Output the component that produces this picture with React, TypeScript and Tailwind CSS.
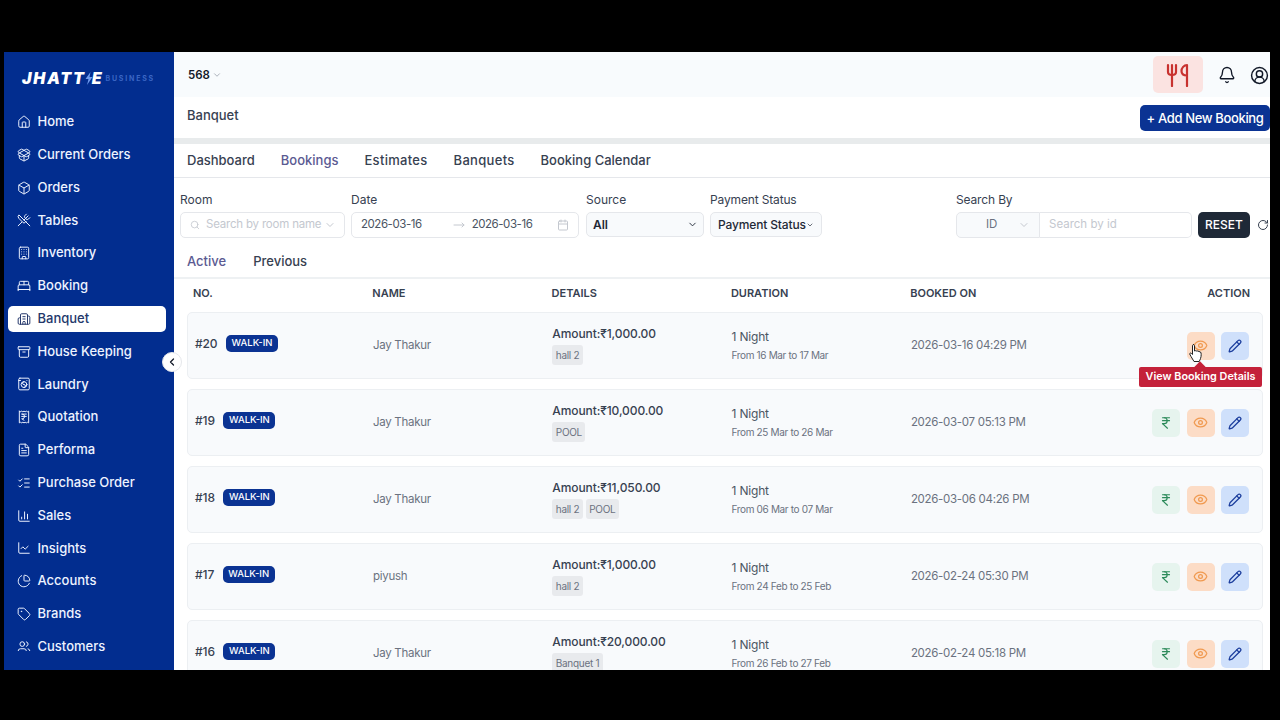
import React from "react";
import {
  Home, PackageOpen, Box, UtensilsCrossed, Building, BedDouble, Building2, Archive, WashingMachine, ReceiptIndianRupee, FileText, ListChecks, ChartColumn, ChartLine, ChartPie, Tag, Users, ChevronLeft, ChevronDown, Bell, CircleUserRound, Search, Calendar, RotateCw, IndianRupee, Eye, Pencil, MoveRight,
} from "lucide-react";

const nav: [string, any][] = [
  ["Home", Home], ["Current Orders", PackageOpen], ["Orders", Box], ["Tables", UtensilsCrossed], ["Inventory", Building], ["Booking", BedDouble], ["Banquet", Building2], ["House Keeping", Archive], ["Laundry", WashingMachine], ["Quotation", ReceiptIndianRupee], ["Performa", FileText], ["Purchase Order", ListChecks], ["Sales", ChartColumn], ["Insights", ChartLine], ["Accounts", ChartPie], ["Brands", Tag], ["Customers", Users],
];

const rows = [
  { id: "#20", name: "Jay Thakur", amt: "₹1,000.00", tags: ["hall 2"], from: "From 16 Mar to 17 Mar", on: "2026-03-16 04:29 PM", pay: false },
  { id: "#19", name: "Jay Thakur", amt: "₹10,000.00", tags: ["POOL"], from: "From 25 Mar to 26 Mar", on: "2026-03-07 05:13 PM", pay: true },
  { id: "#18", name: "Jay Thakur", amt: "₹11,050.00", tags: ["hall 2", "POOL"], from: "From 06 Mar to 07 Mar", on: "2026-03-06 04:26 PM", pay: true },
  { id: "#17", name: "piyush", amt: "₹1,000.00", tags: ["hall 2"], from: "From 24 Feb to 25 Feb", on: "2026-02-24 05:30 PM", pay: true },
  { id: "#16", name: "Jay Thakur", amt: "₹20,000.00", tags: ["Banquet 1"], from: "From 26 Feb to 27 Feb", on: "2026-02-24 05:18 PM", pay: true },
];

export default function App() {
  return (
    <div className="w-[1280px] h-[720px] bg-black pt-[52px] pl-[4px] pr-[10px] pb-[50px] overflow-hidden font-['Inter',sans-serif] text-[#1f2937]">
      <div className="flex h-[618px] w-[1266px] bg-white overflow-hidden">
        <aside className="w-[170px] shrink-0 bg-[#022d8f] relative overflow-hidden">
          <div className="h-[52px] flex items-center pl-[18px]">
            <span className="flex items-center text-white font-black italic text-[16px] tracking-[1.8px]">
              JHATT
              <svg width="8" height="13" viewBox="0 0 8 13" className="mx-[-1px]"><path d="M5.500 0 0.500 7H3.500L2 13 7.500 5H4.500Z" fill="#6f9bee" /></svg>
              E
            </span>
            <span className="ml-[2px] mt-[2px] text-[#3b66c4] text-[7px] font-bold tracking-[1.8px]">BUSINESS</span>
          </div>
          <div className="h-[547px] overflow-hidden pt-[5px]">
            <div className="flex flex-col gap-[6.800px] px-[4px]">
              {nav.map(([label, Icon]) => {
                const active = label === "Banquet";
                return (
                  <div key={label} className={`h-[26px] shrink-0 w-[158px] flex items-center gap-[6.500px] pl-[9px] rounded-[5px] text-[13px] font-medium ${active ? "bg-white text-[#24386b]" : "text-[#eef3ff]"}`}>
                    <Icon size={14} strokeWidth={1.7} />
                    <span>{label}</span>
                  </div>
                );
              })}
            </div>
          </div>
        </aside>

        <main className="relative flex-1 min-w-0 flex flex-col">
          <div className="absolute left-[-12px] top-[300px] w-[20px] h-[20px] rounded-full bg-white border border-[#e5e7eb] flex items-center justify-center z-10">
            <ChevronLeft size={12} strokeWidth={2.5} className="text-[#111827]" />
          </div>

          <div className="h-[45px] bg-[#f8fbfd] flex items-center pl-[14px] pr-[1px] shrink-0">
            <span className="text-[11.500px] font-semibold text-[#111827] mt-[2px]">568</span>
            <ChevronDown size={10} className="ml-[2px] mt-[1px] text-[#9ca3af]" />
            <div className="ml-auto w-[50px] h-[37px] rounded-[5px] bg-[#fbe3e1] flex items-center justify-center">
              <svg width="24" height="24" viewBox="0 0 24 24" fill="none" stroke="#c8322f" strokeWidth="2.2" strokeLinecap="round" strokeLinejoin="round">
                <path d="M2 2v7c0 2 1.500 3 4 3s4-1 4-3V2" />
                <path d="M6 2v21" />
                <path d="M21 23V2c-3 0-5.500 3-5.500 6s2.500 4.500 5.500 4.500" />
              </svg>
            </div>
            <Bell size={18} strokeWidth={1.8} className="ml-[15px] mt-[1px] text-[#111827]" />
            <CircleUserRound size={19} strokeWidth={1.8} className="ml-[14px] mt-[1px] text-[#111827]" />
          </div>

          <div className="h-[41px] bg-white flex items-start justify-between pl-[13px] shrink-0">
            <span className="text-[13px] font-medium text-[#374151] mt-[9px]">Banquet</span>
            <button className="mt-[8px] w-[130px] h-[26px] pt-[1px] rounded-[5px] bg-[#0b3393] text-white text-[13px] font-medium tracking-[-0.35px]">+ Add New Booking</button>
          </div>
          <div className="h-[6px] bg-[#e8ebec] shrink-0" />

          <div className="h-[34px] border-b border-[#e5e7eb] flex items-center gap-[26px] pl-[13px] pt-[1px] text-[13px] font-medium text-[#374151] shrink-0">
            <span>Dashboard</span>
            <span className="text-[#5b5a92]">Bookings</span>
            <span className="tracking-[0.3px]">Estimates</span>
            <span className="tracking-[0.3px]">Banquets</span>
            <span>Booking Calendar</span>
          </div>

          <div className="flex items-start pl-[6px] pt-[15px] h-[69px] text-[12px] text-[#374151] shrink-0">
            <div className="w-[165px]">
              <div className="h-[14px] leading-[14px] mb-[5px]">Room</div>
              <div className="h-[26px] border border-[#e5e7eb] rounded-[5px] flex items-center pl-[9px] pr-[8px] text-[11.500px] text-[#c4c8cf]">
                <Search size={10} className="mr-[6px] shrink-0" />
                <span className="whitespace-nowrap tracking-[-0.2px]">Search by room name</span>
                <ChevronDown size={12} className="ml-auto shrink-0" />
              </div>
            </div>
            <div className="w-[228px] ml-[6px]">
              <div className="h-[14px] leading-[14px] mb-[5px]">Date</div>
              <div className="h-[26px] border border-[#e5e7eb] rounded-[5px] flex items-center pl-[9px] pr-[9px] text-[11.500px] text-[#4b5563] tracking-[-0.45px]">
                <span>2026-03-16</span>
                <MoveRight size={12} className="ml-[31px] mr-[7px] text-[#c4c8cf]" />
                <span>2026-03-16</span>
                <Calendar size={12} className="ml-auto text-[#c4c8cf]" />
              </div>
            </div>
            <div className="w-[118px] ml-[7px]">
              <div className="h-[14px] leading-[14px] mb-[5px]">Source</div>
              <div className="h-[25px] border border-[#e5e7eb] rounded-[5px] flex items-center pl-[6px] pr-[5px] bg-[#f8fafc] font-semibold text-[#1f2937]">
                <span>All</span>
                <ChevronDown size={11} className="ml-auto" />
              </div>
            </div>
            <div className="w-[112px] ml-[6px]">
              <div className="h-[14px] leading-[14px] mb-[5px] whitespace-nowrap tracking-[-0.15px]">Payment Status</div>
              <div className="h-[25px] border border-[#e5e7eb] rounded-[5px] flex items-center pl-[7px] bg-[#f8fafc] font-medium text-[#1f2937] whitespace-nowrap tracking-[-0.15px]">
                <span>Payment Status</span>
                <ChevronDown size={8} />
              </div>
            </div>
            <div className="ml-[134px]">
              <div className="h-[14px] leading-[14px] mb-[5px] tracking-[-0.15px]">Search By</div>
              <div className="flex items-center">
                <div className="w-[84px] h-[26px] border border-[#e5e7eb] rounded-l-[5px] bg-[#f8fafc] flex items-center pl-[29px] pr-[9px] text-[11.500px] text-[#6b7280]">
                  <span>ID</span>
                  <ChevronDown size={12} className="ml-auto text-[#c4c8cf]" />
                </div>
                <div className="w-[152px] h-[26px] border border-l-0 border-[#e5e7eb] rounded-r-[5px] flex items-center pl-[9px] text-[11.500px] text-[#c4c8cf]">Search by id</div>
                <button className="ml-[6px] w-[52px] h-[26px] rounded-[5px] bg-[#1f2937] text-white text-[12px] font-medium">RESET</button>
                <RotateCw size={12} className="ml-[7px] text-[#374151]" />
              </div>
            </div>
          </div>

          <div className="h-[32px] border-b-2 border-[#eef1f3] flex items-start pl-[13px] gap-[27px] text-[13px] font-medium shrink-0">
            <span className="text-[#5b5a92] leading-[28px]">Active</span>
            <span className="text-[#374151] leading-[28px]">Previous</span>
          </div>

          <div className="grid grid-cols-[179.300px_179.300px_179.300px_179.300px_179.300px_1fr] h-[33px] items-center pb-[4px] pl-[19px] pr-[20px] text-[11px] font-semibold text-[#374151] shrink-0">
            <span>NO.</span><span>NAME</span><span>DETAILS</span><span>DURATION</span><span>BOOKED ON</span><span className="text-right">ACTION</span>
          </div>

          <div className="flex flex-col gap-[10px] pl-[13px] pr-[7px]">
            {rows.map((r, i) => (
              <div key={r.id} className="relative h-[67px] shrink-0 rounded-[5px] border border-[#eceff2] bg-[#f8fafc] grid grid-cols-[178px_179.300px_179.300px_179.300px_179.300px_1fr] items-center pl-[7px] pr-[13px]">
                <div className="flex items-center gap-[8.500px] pb-[4px]">
                  <span className="text-[12px] font-medium text-[#374151] tracking-[-0.1px]">{r.id}</span>
                  <span className="h-[17px] w-[52px] rounded-[5px] bg-[#0b3393] text-white text-[9.500px] font-medium flex items-center justify-center">WALK-IN</span>
                </div>
                <div className="pt-[1px] text-[11.500px] tracking-[-0.3px] text-[#6b7280]">{r.name}</div>
                <div className="self-start pt-[13px]">
                  <div className="text-[12px] leading-[15px] font-medium text-[#374151] tracking-[-0.1px]">Amount:{r.amt}</div>
                  <div className="flex gap-[3px] mt-[4px]">
                    {r.tags.map((t) => <span key={t} className="h-[20px] rounded-[3px] bg-[#e8eaed] px-[3.500px] text-[10px] tracking-[-0.3px] leading-[20px] text-[#6b7280]">{t}</span>)}
                  </div>
                </div>
                <div className="self-start pt-[16px]">
                  <div className="text-[12px] leading-[15px] text-[#4b5563] tracking-[-0.2px]">1 Night</div>
                  <div className="text-[10px] leading-[13px] mt-[5px] text-[#6b7280] tracking-[-0.35px]">{r.from}</div>
                </div>
                <div className="pt-[1px] text-[11.500px] tracking-[-0.3px] text-[#6b7280]">{r.on}</div>
                <div className="flex justify-end gap-[6.500px]">
                  {r.pay && <span className="w-[28px] h-[28px] rounded-[5px] bg-[#e6f4ee] flex items-center justify-center"><IndianRupee size={14} className="text-[#2c8a5a]" /></span>}
                  <span className="w-[28px] h-[28px] rounded-[5px] bg-[#fcdcc6] flex items-center justify-center"><Eye size={15} className="text-[#f0994f]" /></span>
                  <span className="w-[28px] h-[28px] rounded-[5px] bg-[#cfe0fb] flex items-center justify-center"><Pencil size={14} strokeWidth={2.2} className="text-[#1d3f9e]" /></span>
                </div>
                {i === 0 && (
                  <>
                    <div className="absolute right-[0px] top-[54px] w-[123px] h-[20px] rounded-[2px] bg-[#c4213a] text-white text-[10.800px] font-semibold flex items-center justify-center z-20 whitespace-nowrap">
                      View Booking Details
                      <span className="absolute top-[-4px] left-[57px] w-[8px] h-[8px] rotate-45 bg-[#c4213a]" />
                    </div>
                    <svg className="absolute left-[1001px] top-[30px] z-30" width="14" height="20" viewBox="0 0 14 20">
                      <path d="M4 1.500c1 0 1.500.7 1.500 1.500v5l1-.3 1 .3 1.200 0 1.300.5 1.500.5c.5.5.7 1.500.7 2.500 0 3-1 5-2 7H5l-3-5-1.300-2.500c0-1 1-1.300 1.800-.5l1 1V3c0-1 .5-1.500 1-1.500z" fill="#fff" stroke="#222" strokeWidth="1" strokeLinejoin="round" />
                    </svg>
                  </>
                )}
              </div>
            ))}
          </div>
        </main>
      </div>
    </div>
  );
}
